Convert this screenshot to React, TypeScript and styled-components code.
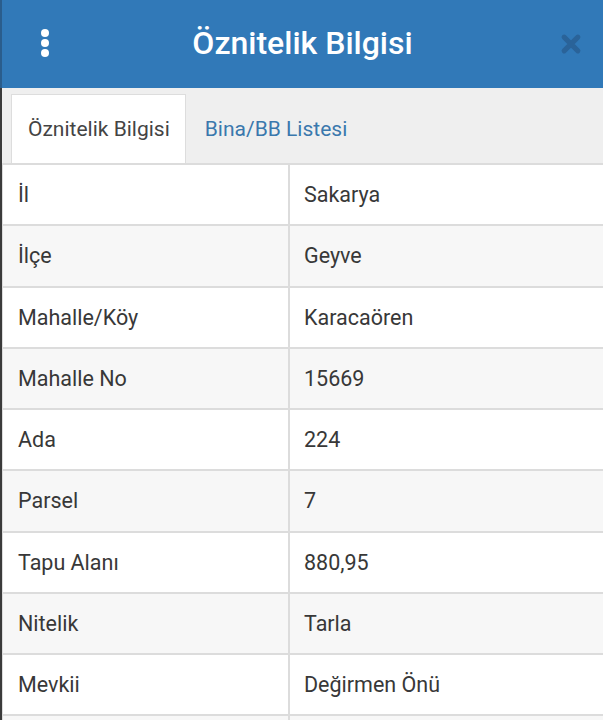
import React from 'react'
import styled, { createGlobalStyle } from 'styled-components'

const GlobalStyle = createGlobalStyle`
  html, body {
    margin: 0;
    padding: 0;
    background: #ffffff;
    font-family: Roboto, "Noto Sans", sans-serif;
  }
`

type Row = { label: string; value: string }

const rows: Row[] = [
  { label: 'İl', value: 'Sakarya' },
  { label: 'İlçe', value: 'Geyve' },
  { label: 'Mahalle/Köy', value: 'Karacaören' },
  { label: 'Mahalle No', value: '15669' },
  { label: 'Ada', value: '224' },
  { label: 'Parsel', value: '7' },
  { label: 'Tapu Alanı', value: '880,95' },
  { label: 'Nitelik', value: 'Tarla' },
  { label: 'Mevkii', value: 'Değirmen Önü' },
  { label: '', value: '' },
]

export default function App() {
  return (
    <>
      <GlobalStyle />
      <Page>
        <Header>
          <MenuButton aria-label="menu">
            <Dot />
            <Dot />
            <Dot />
          </MenuButton>
          <Title>Öznitelik Bilgisi</Title>
          <CloseButton aria-label="close">
            <svg width="22" height="22" viewBox="0 0 24 24">
              <path
                d="M4.5 4.5 L19.5 19.5 M19.5 4.5 L4.5 19.5"
                stroke="#2a6399"
                strokeWidth="5.5"
                strokeLinecap="round"
              />
            </svg>
          </CloseButton>
        </Header>
        <Body>
          <TabBar>
            <Tab active>Öznitelik Bilgisi</Tab>
            <Tab>Bina/BB Listesi</Tab>
          </TabBar>
          <Table>
            {rows.map((r, i) => (
              <TableRow key={i} striped={i % 2 === 1}>
                <LabelCell>{r.label}</LabelCell>
                <ValueCell>{r.value}</ValueCell>
              </TableRow>
            ))}
          </Table>
        </Body>
      </Page>
    </>
  )
}

const Page = styled.div`
  width: 603px;
  height: 720px;
  overflow: hidden;
  display: flex;
  flex-direction: column;
`

const Header = styled.div`
  height: 88px;
  flex-shrink: 0;
  background-color: #3179b8;
  border-left: 2px solid #2a5d8c;
  display: flex;
  align-items: center;
  box-sizing: border-box;
`

const MenuButton = styled.div`
  width: 86px;
  display: flex;
  flex-direction: column;
  align-items: center;
  gap: 2px;
  padding-bottom: 2px;
`

const Dot = styled.span`
  width: 8px;
  height: 8px;
  border-radius: 50%;
  background: #ffffff;
`

const Title = styled.div`
  flex: 1;
  text-align: center;
  color: #ffffff;
  font-size: 32px;
  font-weight: 500;
  margin-top: -3px;
`

const CloseButton = styled.div`
  width: 86px;
  display: flex;
  justify-content: flex-end;
  padding-right: 21px;
  box-sizing: border-box;
`

const Body = styled.div`
  flex: 1;
  border-left: 2px solid #3b3b3b;
  display: flex;
  flex-direction: column;
`

const TabBar = styled.div`
  height: 75px;
  flex-shrink: 0;
  background: #efefef;
  display: flex;
  align-items: flex-end;
  padding-left: 9px;
  box-sizing: border-box;
`

const Tab = styled.div<{ active?: boolean }>`
  height: 69px;
  box-sizing: border-box;
  display: flex;
  align-items: center;
  padding: 0 15px 0 16px;
  font-size: 21px;
  color: ${(p) => (p.active ? '#444444' : '#3a78ad')};
  background: ${(p) => (p.active ? '#ffffff' : 'transparent')};
  border: 1px solid ${(p) => (p.active ? '#dddddd' : 'transparent')};
  border-bottom: none;
  margin-right: 2px;
`

const Table = styled.div`
  border-top: 2px solid #dcdcdc;
  display: flex;
  flex-direction: column;
`

const TableRow = styled.div<{ striped?: boolean }>`
  height: 61.25px;
  flex-shrink: 0;
  box-sizing: border-box;
  display: grid;
  grid-template-columns: 287px 1fr;
  background: ${(p) => (p.striped ? '#f7f7f7' : '#ffffff')};
  border-bottom: 2px solid #dcdcdc;
  border-left: 1px solid #dcdcdc;
`

const LabelCell = styled.div`
  display: flex;
  align-items: center;
  padding-left: 15px;
  font-size: 21.5px;
  color: #383838;
  border-right: 2px solid #dcdcdc;
`

const ValueCell = styled.div`
  display: flex;
  align-items: center;
  padding-left: 14px;
  font-size: 21.5px;
  color: #383838;
`
